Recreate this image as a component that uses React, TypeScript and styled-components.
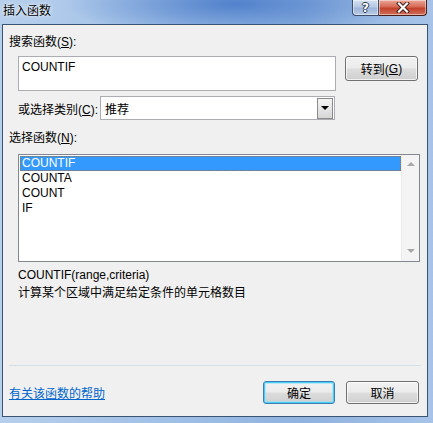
import React from 'react';
import styled, { createGlobalStyle } from 'styled-components';

const FONT = `"Liberation Sans", "Noto Sans CJK SC", sans-serif`;

const GlobalStyle = createGlobalStyle`
  html, body {
    margin: 0;
    padding: 0;
  }
  body {
    font-family: ${FONT};
    font-size: 12px;
    color: #000;
  }
`;

/* Window frame */
const Frame = styled.div`
  width: 433px;
  height: 423px;
  box-sizing: border-box;
  display: flex;
  flex-direction: column;
  padding: 0 5px 6px 2px;
  background:
    radial-gradient(ellipse 170px 34px at 235px 4px, rgba(70, 120, 200, 0.85) 0%, rgba(70, 120, 200, 0) 100%),
    linear-gradient(to right, #b6cfec 0%, #9dbde5 45%, #8fb2df 70%, #a7c3e8 100%);
`;

const TitleBar = styled.div`
  height: 24px;
  display: flex;
  align-items: flex-start;
`;

const Title = styled.div`
  padding: 4px 0 0 1px;
  font-size: 12px;
  line-height: 14px;
  color: #000;
  text-shadow: 0 0 6px rgba(255, 255, 255, 0.9), 0 0 2px rgba(255, 255, 255, 0.8);
`;

const CaptionButtons = styled.div`
  margin-left: auto;
  margin-right: 1px;
  display: flex;
`;

const CaptionButton = styled.div<{ $kind: 'help' | 'close' }>`
  height: 16px;
  box-sizing: border-box;
  width: ${(p) => (p.$kind === 'close' ? '48px' : '27px')};
  display: flex;
  align-items: center;
  justify-content: center;
  border: 1px solid #3c4e6a;
  border-top: none;
  ${(p) =>
    p.$kind === 'close'
      ? `
    border-left: none;
    border-radius: 0 0 4px 0;
    background: linear-gradient(to bottom, #e9a899 0%, #d66a55 45%, #c3412b 55%, #d0705c 100%);
    border-color: #4a1d16;
  `
      : `
    border-radius: 0 0 0 4px;
    background: linear-gradient(to bottom, #d3e0f1 0%, #b6c9e5 45%, #9fb6da 55%, #b8cbe6 100%);
  `}
  box-shadow: inset 0 0 0 1px rgba(255, 255, 255, 0.45);
`;

const HelpGlyph = styled.span`
  font-family: "DejaVu Sans", sans-serif;
  font-weight: bold;
  font-size: 12px;
  line-height: 12px;
  color: #fff;
  text-shadow: 1px 0 0 #2b3a52, -1px 0 0 #2b3a52, 0 1px 0 #2b3a52, 0 -1px 0 #2b3a52;
`;

/* Client area */
const Client = styled.div`
  flex: 1;
  display: flex;
  flex-direction: column;
  background: #f0f0f0;
  border: 1px solid #3a5474;
`;

const SectionLabel = styled.div<{ $top: number }>`
  margin: ${(p) => p.$top}px 0 0 6px;
  line-height: 16px;
  height: 16px;
`;

const SearchRow = styled.div`
  display: flex;
  align-items: flex-start;
  margin: 6px 0 0 15px;
`;

const SearchBox = styled.div`
  width: 318px;
  height: 35px;
  box-sizing: border-box;
  background: #fff;
  border: 1px solid #abadb3;
  padding: 3px 3px;
  line-height: 14px;
`;

const PushButton = styled.div<{ $focused?: boolean; $width: number; $height: number }>`
  width: ${(p) => p.$width}px;
  height: ${(p) => p.$height}px;
  box-sizing: border-box;
  display: flex;
  align-items: center;
  justify-content: center;
  border-radius: 3px;
  border: 1px solid ${(p) => (p.$focused ? '#3c7fb1' : '#707070')};
  background: linear-gradient(to bottom, #f2f2f2 0%, #ebebeb 48%, #dddddd 52%, #cfcfcf 100%);
  box-shadow: ${(p) =>
    p.$focused
      ? 'inset 0 0 0 1px #48cdf6, inset 0 0 0 2px rgba(150, 225, 250, 0.6)'
      : 'inset 0 0 0 1px rgba(255, 255, 255, 0.7)'};
`;

const GoButton = styled(PushButton)`
  margin-left: 9px;
`;

const CategoryRow = styled.div`
  display: flex;
  align-items: center;
  margin: 5px 0 0 15px;
`;

const CategoryLabel = styled.div`
  width: 82px;
  flex-shrink: 0;
`;

const Select = styled.div`
  width: 235px;
  height: 24px;
  box-sizing: border-box;
  border: 1px solid #abadb3;
  background: #fff;
  display: flex;
  align-items: center;
  padding: 1px;
`;

const SelectValue = styled.div`
  flex: 1;
  padding-left: 3px;
`;

const DropButton = styled.div`
  width: 16px;
  height: 21px;
  box-sizing: border-box;
  border: 1px solid #8a8a8a;
  background: linear-gradient(to bottom, #f4f4f4 0%, #e6e6e6 50%, #d6d6d6 100%);
  display: flex;
  align-items: center;
  justify-content: center;
`;

const Triangle = styled.div<{ $dir: 'up' | 'down'; $color: string }>`
  width: 0;
  height: 0;
  border-left: 4px solid transparent;
  border-right: 4px solid transparent;
  ${(p) =>
    p.$dir === 'down'
      ? `border-top: 4px solid ${p.$color};`
      : `border-bottom: 4px solid ${p.$color};`}
`;

const ListBox = styled.div`
  margin: 8px 0 0 15px;
  width: 402px;
  height: 108px;
  box-sizing: border-box;
  border: 1px solid #828790;
  background: #fff;
  display: flex;
`;

const ListItems = styled.div`
  flex: 1;
  padding: 1px 0 0 1px;
`;

const ListItem = styled.div<{ $selected?: boolean }>`
  height: 15px;
  box-sizing: border-box;
  line-height: 13px;
  padding-left: 1px;
  border: 1px dotted ${(p) => (p.$selected ? '#a8703a' : 'transparent')};
  background: ${(p) => (p.$selected ? '#3399ff' : 'transparent')};
  color: ${(p) => (p.$selected ? '#fff' : '#000')};
`;

const ScrollBar = styled.div`
  width: 17px;
  background: #f4f4f4;
  border-left: 1px solid #ececec;
  display: flex;
  flex-direction: column;
  justify-content: space-between;
  align-items: center;
  padding: 7px 0 8px;
`;

const InfoText = styled.div<{ $top: number }>`
  margin: ${(p) => p.$top}px 0 0 15px;
  height: 16px;
  line-height: 16px;
`;

const Separator = styled.div`
  margin: 64px 6px 0 6px;
  height: 1px;
  background: #d6dee6;
`;

const Footer = styled.div`
  display: flex;
  align-items: center;
  margin: 15px 8px 0 6px;
`;

const HelpLink = styled.a`
  color: #0066cc;
  text-decoration: underline;
  cursor: pointer;
`;

const FooterButtons = styled.div`
  margin-left: auto;
  display: flex;
  gap: 11px;
`;

const App: React.FC = () => (
  <>
    <GlobalStyle />
    <Frame>
      <TitleBar>
        <Title>插入函数</Title>
        <CaptionButtons>
          <CaptionButton $kind="help">
            <HelpGlyph>?</HelpGlyph>
          </CaptionButton>
          <CaptionButton $kind="close">
            <svg width="14" height="11" viewBox="0 0 14 11">
              <path d="M3 1.5 L11 9.5 M11 1.5 L3 9.5" stroke="#3a1a14" strokeWidth="4" strokeLinecap="square" />
              <path d="M3 1.5 L11 9.5 M11 1.5 L3 9.5" stroke="#fff" strokeWidth="2.2" strokeLinecap="square" />
            </svg>
          </CaptionButton>
        </CaptionButtons>
      </TitleBar>
      <Client>
        <SectionLabel $top={9}>
          搜索函数(<u>S</u>):
        </SectionLabel>
        <SearchRow>
          <SearchBox>COUNTIF</SearchBox>
          <GoButton $width={73} $height={25}>
            转到(<u>G</u>)
          </GoButton>
        </SearchRow>
        <CategoryRow>
          <CategoryLabel>
            或选择类别(<u>C</u>):
          </CategoryLabel>
          <Select>
            <SelectValue>推荐</SelectValue>
            <DropButton>
              <Triangle $dir="down" $color="#000" />
            </DropButton>
          </Select>
        </CategoryRow>
        <SectionLabel $top={10}>
          选择函数(<u>N</u>):
        </SectionLabel>
        <ListBox>
          <ListItems>
            <ListItem $selected>COUNTIF</ListItem>
            <ListItem>COUNTA</ListItem>
            <ListItem>COUNT</ListItem>
            <ListItem>IF</ListItem>
          </ListItems>
          <ScrollBar>
            <Triangle $dir="up" $color="#a8a8a8" />
            <Triangle $dir="down" $color="#a8a8a8" />
          </ScrollBar>
        </ListBox>
        <InfoText $top={5}>COUNTIF(range,criteria)</InfoText>
        <InfoText $top={2}>计算某个区域中满足给定条件的单元格数目</InfoText>
        <Separator />
        <Footer>
          <HelpLink>有关该函数的帮助</HelpLink>
          <FooterButtons>
            <PushButton $focused $width={72} $height={23}>
              确定
            </PushButton>
            <PushButton $width={73} $height={23}>
              取消
            </PushButton>
          </FooterButtons>
        </Footer>
      </Client>
    </Frame>
  </>
);

export default App;
